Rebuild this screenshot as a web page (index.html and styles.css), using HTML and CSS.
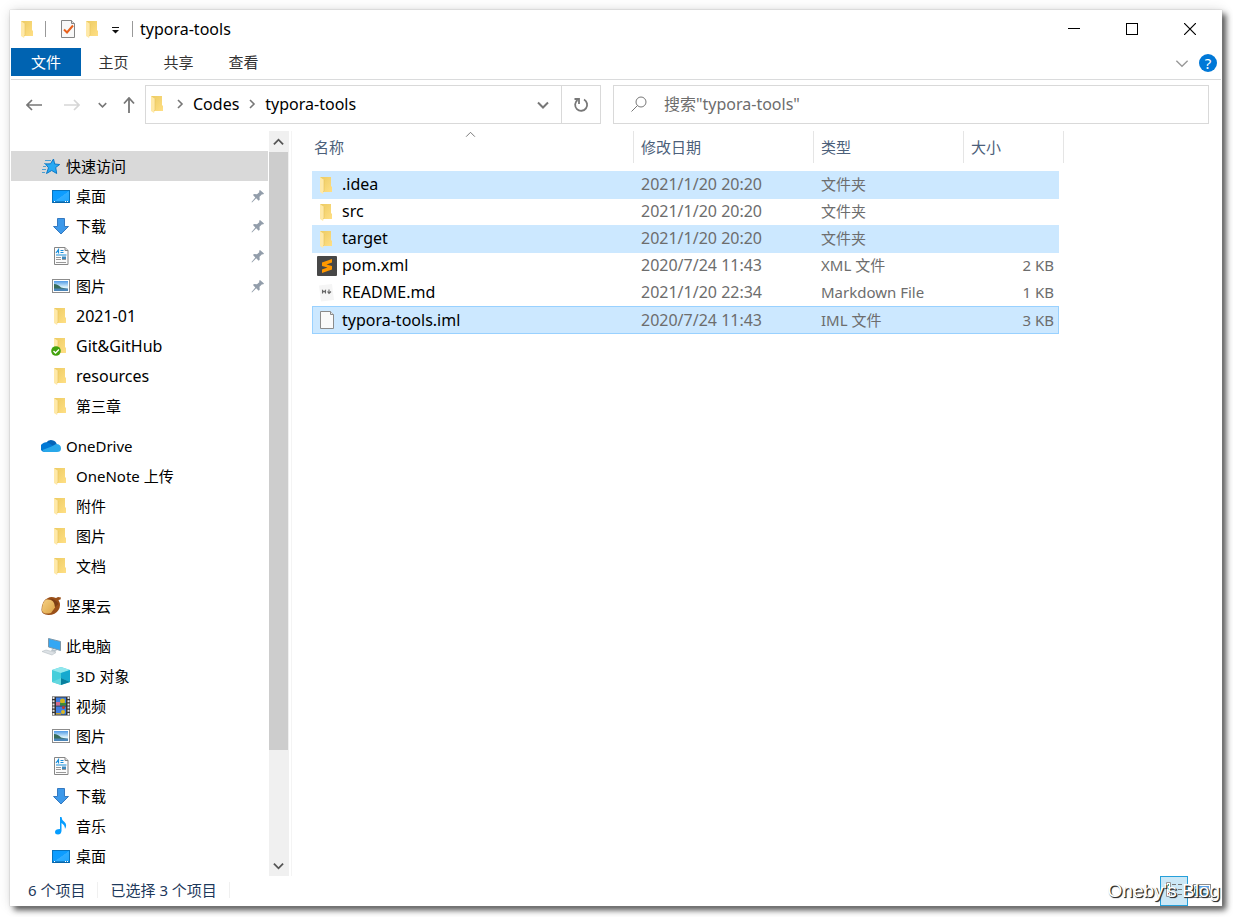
FILE: index.html
```html
<!DOCTYPE html>
<html lang="zh-CN">
<head>
<meta charset="utf-8">
<title>typora-tools</title>
<link rel="stylesheet" href="styles.css">
</head>
<body>
<svg class="defs" aria-hidden="true">
  <defs>
    <linearGradient id="g-folder" x1="0" x2="1" y1="0" y2="1"><stop offset="0" stop-color="#eccb62"/><stop offset="1" stop-color="#ffdf85"/></linearGradient>
    <linearGradient id="g-blue" x1="0" x2="1" y1="0" y2="1"><stop offset="0" stop-color="#0a9cff"/><stop offset="0.5" stop-color="#0d9dff"/><stop offset="0.52" stop-color="#2fadff"/><stop offset="1" stop-color="#1ea6ff"/></linearGradient>
    <linearGradient id="g-sky" x1="0" x2="0" y1="0" y2="1"><stop offset="0" stop-color="#4f9ae6"/><stop offset="0.6" stop-color="#d9f1fb"/><stop offset="1" stop-color="#eef"/></linearGradient>
    <linearGradient id="g-nut" x1="0" x2="1" y1="0" y2="1"><stop offset="0" stop-color="#f5d084"/><stop offset="1" stop-color="#dca345"/></linearGradient>
  </defs>
  <symbol id="folder" viewBox="0 0 20 20"><path d="M3 2h11v9l1 1v5H5z" fill="url(#g-folder)"/><path d="M3 2l4 3v11l-1 3-3-2z" fill="#ffe9a8"/><path d="M7 5v11l-1 1" fill="none" stroke="#e6c25c" stroke-width=".6"/></symbol>
  <symbol id="check-doc" viewBox="0 0 20 20"><path d="M3.500 1.500h10l3 3v14h-13z" fill="#f8f8f8" stroke="#858585"/><path d="M13.500 1.500v3h3" fill="#ddd" stroke="#858585"/><path d="M6 10.500l3 3 6-7" fill="none" stroke="#e8601c" stroke-width="2"/></symbol>
  <symbol id="star" viewBox="0 0 20 20"><path d="M12.500 3l1.200 5 5 .500-4 3 1 6-5-3-5.200 3 2-5.700-3-3.800 5-.200z" fill="#27a9f3" stroke="#0c78c6"/><path d="M4 4.500h6M3 7.500h3M2 10.500h3M1 13.500h4M1 16.500h3" stroke="#4b9fd2" fill="none"/></symbol>
  <symbol id="desktop" viewBox="0 0 20 20"><rect x="1.500" y="4.500" width="17" height="12" fill="url(#g-blue)" stroke="#0873bd"/><path d="M2 16h16" stroke="#075b99"/><path d="M3 15.500h1M14 15.500h1M16 15.500h1" stroke="#fff"/></symbol>
  <symbol id="download" viewBox="0 0 20 20"><path d="M6.500 2.500h7v8h4L10 18 2.500 10.500h4z" fill="#3d99ea" stroke="#3579c0"/></symbol>
  <symbol id="document" viewBox="0 0 20 20"><path d="M3.500 1.500h10.500l3 3v14H3.500z" fill="#fcfcfc" stroke="#868686"/><path d="M14 1.500v3h3" fill="#ddd" stroke="#868686"/><path d="M5 7L7.500 3.500v4M9.500 4.500h3M9.500 6.500h3M5 9h10.500" stroke="#168dda" stroke-width="1.200" fill="none"/><path d="M5 11.500h5M5 13.500h5M5 16.500h10M11 13.500h4" stroke="#9a9a9a"/><path d="M11 10.500h4v2.500h-4z" fill="#4089bc"/></symbol>
  <symbol id="picture" viewBox="0 0 20 20"><rect x="1.500" y="3.500" width="17" height="13" fill="#fff" stroke="#8c8c8c"/><rect x="3" y="5" width="14" height="10" fill="url(#g-sky)"/><path d="M3 8q4 0 7 3.500l7 1.500H3z" fill="#386c5b"/><path d="M3 12.500h14V15H3z" fill="#4b86b9"/></symbol>
  <symbol id="folder-ok" viewBox="0 0 20 20"><use href="#folder"/><circle cx="5" cy="15" r="4.800" fill="#43a20d"/><path d="M2.500 15l2 2L8 13.500" fill="none" stroke="#fff" stroke-width="1.400"/></symbol>
  <symbol id="cloud" viewBox="0 0 20 20"><path d="M5 7a6 6 0 0 1 11 2l-4 4-7-2z" fill="#0364b8"/><path d="M4 16A4.500 4.500 0 0 1 1 8Q4 5 8 7l7 5-9 3.500z" fill="#0078d4"/><path d="M10.500 10.500l4.500-2.500q5 0 5 4.500 0 3.500-4 3.500H4q-2 0-2.500-2z" fill="#28a8ea"/></symbol>
  <symbol id="nut" viewBox="0 0 20 20"><path d="M7 2q3-2 8 0l2-1 3 .500-.500 2-2 .500q3 5 0 10-3 5-10 5-7-.500-7-5Q1 4 7 2z" fill="#9a5019"/><path d="M5 3.500q9-1 9 8l-4 5.500q-8 2-9-2.500Q1 6 5 3.500z" fill="url(#g-nut)"/><path d="M8 2.500q6 2 6 8.500l3.500-3q-2-5-9.500-5.500z" fill="#7c3f16"/></symbol>
  <symbol id="pc" viewBox="0 0 20 20"><path d="M7.500 2.500l12 3v9l-12-3.500z" fill="#35a7f3" stroke="#7d97a9"/><path d="M11 13l5 1.500-2 1.500-4-1z" fill="#b7c2c9"/><path d="M1 15.500l4-1.500 10 2.500-4 2.500z" fill="#dce1e5" stroke="#b6bdc3" stroke-width=".6"/></symbol>
  <symbol id="cube" viewBox="0 0 20 20"><path d="M1 4l9-3 9 3v12l-9 3-9-3z" fill="#45cedb"/><path d="M1 4l9-3 9 3-9 3z" fill="#91e7ed"/><path d="M10 7l9-3v12l-9-4z" fill="#16a9cf"/><path d="M10 12l9 4-9 3z" fill="#087f9e"/><path d="M1 16l9-4v7z" fill="#65d8df"/></symbol>
  <symbol id="video" viewBox="0 0 20 20"><path d="M1 .500h18v19H1z" fill="#333"/><path d="M5 1.500h10v8H5zM5 10.500h10v8H5z" fill="#3d7de0"/><path d="M2.500 1v18M17.500 1v18" stroke="#e5e5e5" stroke-width="2" stroke-dasharray="2 1.200"/><path d="M5 6h4v3.500H5z" fill="#d56b8a"/><circle cx="11.500" cy="5" r="2.500" fill="#d3b51d"/><path d="M9 7h6v2.500H9z" fill="#3f8b36"/><circle cx="12.500" cy="11.500" r="1.500" fill="#c33b25"/><circle cx="12" cy="16" r="2" fill="#ddb71e"/><path d="M5 17h5v1.500H5z" fill="#c9a12b"/></symbol>
  <symbol id="music" viewBox="0 0 20 20"><path d="M9 1h1.500q0 3 3 5 3 3 .500 7 0-4-3.500-6v8q-.500 3.500-3.500 3.500T4 16q0-3 5-3z" fill="#069dff"/></symbol>
  <symbol id="sublime" viewBox="0 0 20 20"><rect width="20" height="20" rx="1" fill="#474747"/><path d="M5 6.500L15 3v3.500L9.500 8.500 15 10v3.500L5 17v-3.500l5.500-2L5 10z" fill="#ff9800"/></symbol>
  <symbol id="markdown" viewBox="0 0 20 20"><path d="M2 2.500L15 1l2 16L4 18.500z" fill="#f5f5f5"/><path d="M5.500 10.500v-3l1.500 1.500 1.500-1.500v3M12 6.500v4M10.500 8.500l1.500 2 2-2" fill="none" stroke="#666" stroke-width="1.100"/></symbol>
  <symbol id="blank" viewBox="0 0 20 20"><path d="M3.500 1.500h10l3 3v14h-13z" fill="#fafafa" stroke="#8b8b8b"/><path d="M13.500 1.500v3h3" fill="#e8e8e8" stroke="#8b8b8b"/></symbol>
  <symbol id="pin" viewBox="0 0 14 14"><path d="M9 1l4 3.500-1 1-1-.200-2.500 2.500.200 3-1 1-2.500-2.500L1 13.500.500 13l3.800-4.500L2 6l1-1 3 .200L8.500 3 8 2z" fill="#929daa"/></symbol>
  <symbol id="chev-down" viewBox="0 0 12 8"><path d="M1 1.500l5 5 5-5" fill="none" stroke="currentColor" stroke-width="var(--w, 2)"/></symbol>
  <symbol id="chev-up" viewBox="0 0 12 8"><path d="M1 6.500l5-5 5 5" fill="none" stroke="currentColor" stroke-width="var(--w, 2)"/></symbol>
  <symbol id="chev-right" viewBox="0 0 8 12"><path d="M2 2l4 4-4 4" fill="none" stroke="currentColor" stroke-width="1.600"/></symbol>
</svg>

<div class="window">
  <header class="titlebar">
    <svg class="icon"><use href="#folder"/></svg>
    <span class="bar"></span>
    <button class="quick quick-props" aria-label="属性"><svg class="icon"><use href="#check-doc"/></svg></button>
    <button class="quick" aria-label="新建文件夹"><svg class="icon"><use href="#folder"/></svg></button>
    <button class="quick quick-more" aria-label="自定义快速访问工具栏"><svg width="9" height="8" viewBox="0 0 9 8"><path d="M1 1.500h7" stroke="#111"/><path d="M1 4h7L4.500 7.500z" fill="#111"/></svg></button>
    <span class="bar"></span>
    <h1 class="title">typora-tools</h1>
    <div class="controls">
      <button class="control" aria-label="最小化"><svg width="12" height="12"><path d="M0 5.500h12" stroke="#000"/></svg></button>
      <button class="control" aria-label="最大化"><svg width="12" height="12"><rect x=".5" y=".5" width="11" height="11" fill="none" stroke="#000"/></svg></button>
      <button class="control" aria-label="关闭"><svg width="12" height="12"><path d="M0 0l12 12M12 0L0 12" stroke="#000" stroke-width="1.200"/></svg></button>
    </div>
  </header>

  <nav class="ribbon">
    <button class="tab tab-file">文件</button>
    <button class="tab">主页</button>
    <button class="tab">共享</button>
    <button class="tab">查看</button>
    <div class="ribbon-end">
      <button class="plain expand" aria-label="展开功能区"><svg width="14" height="9"><use href="#chev-down"/></svg></button>
      <button class="help" aria-label="帮助">?</button>
    </div>
  </nav>

  <div class="location">
    <div class="history">
      <button class="plain" aria-label="后退"><svg width="16" height="12"><path d="M1 6h15M6 1L1 6l5 5" fill="none" stroke="#777" stroke-width="1.700"/></svg></button>
      <button class="plain" aria-label="前进" disabled><svg width="16" height="12"><path d="M0 6h15M10 1l5 5-5 5" fill="none" stroke="#d6d6d6" stroke-width="1.700"/></svg></button>
      <button class="plain recent" aria-label="最近浏览的位置"><svg width="9" height="6"><use href="#chev-down"/></svg></button>
      <button class="plain" aria-label="向上"><svg width="12" height="16"><path d="M6 16V1M1 6.500L6 1l5 5.500" fill="none" stroke="#777" stroke-width="1.800"/></svg></button>
    </div>
    <div class="address">
      <svg class="icon"><use href="#folder"/></svg>
      <svg class="crumb-sep" width="8" height="12"><use href="#chev-right"/></svg>
      <a class="crumb" href="#codes">Codes</a>
      <svg class="crumb-sep" width="8" height="12"><use href="#chev-right"/></svg>
      <a class="crumb" href="#typora-tools">typora-tools</a>
      <button class="plain drop" aria-label="以前的位置"><svg width="12" height="8"><use href="#chev-down"/></svg></button>
      <button class="plain refresh" aria-label="刷新"><svg width="16" height="16" viewBox="0 0 16 16"><path d="M11 2.500A6 6 0 1 1 4.500 3M1.500 2H6v5" fill="none" stroke="#777" stroke-width="1.800"/></svg></button>
    </div>
    <label class="search">
      <svg width="16" height="16" viewBox="0 0 16 16"><circle cx="10" cy="6" r="5" fill="none" stroke="#777"/><path d="M6.500 9.500L.500 15.500" stroke="#777"/></svg>
      <input type="text" aria-label="搜索" placeholder="搜索&quot;typora-tools&quot;">
    </label>
  </div>

  <div class="main">
    <aside class="sidebar">
      <div class="tree">
        <ul class="group">
          <li class="node root active"><svg class="icon"><use href="#star"/></svg>快速访问</li>
          <li class="node"><svg class="icon"><use href="#desktop"/></svg>桌面<svg class="pin"><use href="#pin"/></svg></li>
          <li class="node"><svg class="icon"><use href="#download"/></svg>下载<svg class="pin"><use href="#pin"/></svg></li>
          <li class="node"><svg class="icon"><use href="#document"/></svg>文档<svg class="pin"><use href="#pin"/></svg></li>
          <li class="node"><svg class="icon"><use href="#picture"/></svg>图片<svg class="pin"><use href="#pin"/></svg></li>
          <li class="node latin"><svg class="icon"><use href="#folder"/></svg>2021-01</li>
          <li class="node latin"><svg class="icon"><use href="#folder-ok"/></svg>Git&amp;GitHub</li>
          <li class="node latin"><svg class="icon"><use href="#folder"/></svg>resources</li>
          <li class="node"><svg class="icon"><use href="#folder"/></svg>第三章</li>
        </ul>
        <ul class="group">
          <li class="node root"><svg class="icon"><use href="#cloud"/></svg>OneDrive</li>
          <li class="node"><svg class="icon"><use href="#folder"/></svg>OneNote 上传</li>
          <li class="node"><svg class="icon"><use href="#folder"/></svg>附件</li>
          <li class="node"><svg class="icon"><use href="#folder"/></svg>图片</li>
          <li class="node"><svg class="icon"><use href="#folder"/></svg>文档</li>
        </ul>
        <ul class="group">
          <li class="node root"><svg class="icon"><use href="#nut"/></svg>坚果云</li>
        </ul>
        <ul class="group">
          <li class="node root"><svg class="icon"><use href="#pc"/></svg>此电脑</li>
          <li class="node"><svg class="icon"><use href="#cube"/></svg>3D 对象</li>
          <li class="node"><svg class="icon"><use href="#video"/></svg>视频</li>
          <li class="node"><svg class="icon"><use href="#picture"/></svg>图片</li>
          <li class="node"><svg class="icon"><use href="#document"/></svg>文档</li>
          <li class="node"><svg class="icon"><use href="#download"/></svg>下载</li>
          <li class="node"><svg class="icon"><use href="#music"/></svg>音乐</li>
          <li class="node"><svg class="icon"><use href="#desktop"/></svg>桌面</li>
        </ul>
      </div>
      <div class="scrollbar">
        <button class="plain scroll-btn" aria-label="向上滚动"><svg width="11" height="8"><use href="#chev-up"/></svg></button>
        <div class="track"><div class="thumb"></div></div>
        <button class="plain scroll-btn" aria-label="向下滚动"><svg width="11" height="8"><use href="#chev-down"/></svg></button>
      </div>
    </aside>

    <section class="files">
      <table class="list">
        <colgroup><col class="c-name"><col class="c-date"><col class="c-type"><col class="c-size"></colgroup>
        <thead>
          <tr>
            <th><div class="head head-name">名称<svg class="sort" width="11" height="7"><use href="#chev-up"/></svg></div></th>
            <th><div class="head">修改日期</div></th>
            <th><div class="head">类型</div></th>
            <th><div class="head head-size">大小</div></th>
          </tr>
        </thead>
        <tbody>
          <tr class="selected"><td><div class="file"><svg class="icon"><use href="#folder"/></svg>.idea</div></td><td class="latin">2021/1/20 20:20</td><td>文件夹</td><td></td></tr>
          <tr><td><div class="file"><svg class="icon"><use href="#folder"/></svg>src</div></td><td class="latin">2021/1/20 20:20</td><td>文件夹</td><td></td></tr>
          <tr class="selected"><td><div class="file"><svg class="icon"><use href="#folder"/></svg>target</div></td><td class="latin">2021/1/20 20:20</td><td>文件夹</td><td></td></tr>
          <tr><td><div class="file"><svg class="icon"><use href="#sublime"/></svg>pom.xml</div></td><td class="latin">2020/7/24 11:43</td><td>XML 文件</td><td>2 KB</td></tr>
          <tr><td><div class="file"><svg class="icon"><use href="#markdown"/></svg>README.md</div></td><td class="latin">2021/1/20 22:34</td><td>Markdown File</td><td>1 KB</td></tr>
          <tr class="selected focused"><td><div class="file"><svg class="icon"><use href="#blank"/></svg>typora-tools.iml</div></td><td class="latin">2020/7/24 11:43</td><td>IML 文件</td><td>3 KB</td></tr>
        </tbody>
      </table>
    </section>
  </div>

  <footer class="status">
    <span class="stat">6 个项目</span>
    <span class="stat">已选择 3 个项目</span>
    <div class="views">
      <button class="view view-on" aria-label="详细信息"><svg width="20" height="18" viewBox="0 0 20 18"><path d="M2.500.500h4v14h-4z" fill="#fff" stroke="#999"/><path d="M4 3h1M4 7h1" stroke="#4a8" stroke-width="2"/><path d="M4 12h1" stroke="#c54" stroke-width="2"/><path d="M8 2.500h4M14 2.500h4M8 7.500h4M14 7.500h4M8 12.500h4M14 12.500h4" stroke="#777"/></svg></button>
      <button class="view" aria-label="大图标"><svg width="20" height="20"><use href="#picture"/></svg></button>
      <span class="watermark">Oneby's Blog</span>
    </div>
  </footer>
</div>
</body>
</html>
```
FILE: styles.css
```css
* { box-sizing: border-box; }

body {
  margin: 0;
  height: 100vh;
  padding: 10px 11px 11px 10px;
  background: #fff;
  color: #000;
  font: 15px/20px "Noto Sans", "Noto Sans CJK SC", sans-serif;
}

.defs { position: absolute; width: 0; height: 0; }
svg { display: block; flex: none; }
.icon { width: 20px; height: 20px; }
.latin { font-size: 16px; }

button { font: inherit; color: inherit; border: 0; padding: 0; background: none; }
.plain { display: flex; align-items: center; justify-content: center; }

.window {
  height: 100%;
  display: flex;
  flex-direction: column;
  padding: 0 1px;
  background: #fff;
  box-shadow: 0 0 1px #aaa, 4px 4px 6px rgba(0, 0, 0, .65), 0 0 12px rgba(0, 0, 0, .12);
}

.titlebar { display: flex; align-items: center; height: 38px; padding-left: 7px; }
.bar { width: 1px; height: 16px; background: #999; margin-left: 7px; }
.quick { margin-left: 5px; }
.quick-props { margin-left: 12px; }
.quick-more { margin-left: 8px; padding-top: 2px; }
.quick-more + .bar { margin-left: 12px; }
.title { margin: 0; padding-left: 7px; font-size: 16px; font-weight: 400; }
.controls { display: flex; align-self: stretch; margin-left: auto; margin-right: 2px; }
.control { width: 58px; display: flex; align-items: center; justify-content: center; }

.ribbon { display: flex; height: 32px; padding-bottom: 3px; border-bottom: 1px solid #dadbdc; }
.tab { width: 65px; color: #333; }
.tab-file { width: 70px; background: #0063b1; color: #fff; }
.ribbon-end { display: flex; align-items: center; margin-left: auto; padding: 2px 4px 0 0; gap: 10px; }
.expand { color: #999; --w: 1.2; }
.help { width: 18px; height: 18px; border-radius: 50%; background: #0078d7; color: #fff; font-size: 15px; line-height: 18px; }

.location { display: flex; padding: 5px 12px 6px 0; height: 50px; }
.history { width: 134px; display: flex; align-items: center; gap: 16px; padding-left: 15px; }
.history .plain + .plain { margin-left: 6px; }
.history .plain + .recent { margin-left: 2px; }
.history .recent + .plain { margin-left: 0; }
.recent { color: #777; }
.address, .search { display: flex; align-items: center; border: 1px solid #d9d9d9; }
.address { flex: 456 1 456px; padding: 0 0 2px 2px; }
.crumb { color: #000; text-decoration: none; margin: 0 9px; font-size: 16px; }
.crumb-sep { color: #777; }
.icon + .crumb-sep { margin-left: 8px; }
.drop { margin-left: auto; width: 36px; padding-top: 2px; color: #777; }
.refresh { width: 39px; align-self: stretch; margin-bottom: -2px; border-left: 1px solid #d9d9d9; }
.search { flex: 596 1 596px; margin-left: 12px; padding: 0 0 2px 17px; gap: 17px; }
.search input { flex: 1; min-width: 0; border: 0; outline: 0; padding: 0; font: inherit; font-size: 16px; color: #6d6d6d; }
.search input::placeholder { color: #6d6d6d; opacity: 1; }

.main { flex: 1; min-height: 0; display: flex; padding-top: 1px; }
.sidebar { width: 281px; display: flex; border-right: 1px solid #f4f4f4; }
.tree { flex: 1; overflow: hidden; padding-top: 20px; margin-right: 1px; }
.group { list-style: none; margin: 0 0 10px; padding: 0; }
.node { display: flex; align-items: center; height: 30px; gap: 5px; padding: 0 3px 0 40px; }
.root { padding-left: 30px; }
.active { background: #d9d9d9; }
.pin { width: 14px; height: 14px; margin-left: auto; }

.scrollbar { width: 20px; margin-right: 2px; display: flex; flex-direction: column; background: #f0f0f0; }
.scroll-btn { height: 21px; padding-right: 1px; color: #555; }
.track { flex: 1; padding-right: 1px; }
.thumb { height: 85%; background: #cdcdcd; }

.files { flex: 1; padding-left: 20px; overflow: hidden; }
.list { table-layout: fixed; width: 747px; border-collapse: separate; border-spacing: 0; }
.c-name { width: 322px; }
.c-date { width: 180px; }
.c-type { width: 150px; }
.c-size { width: 95px; }
.list th { padding: 0 0 8px; font-weight: 400; text-align: left; color: #4c607a; }
.head { height: 32px; line-height: 32px; padding-left: 7px; border-right: 1px solid #e5e5e5; }
.head-name { position: relative; padding-left: 2px; }
.head-size { margin-right: -5px; }
.sort { position: absolute; top: 0; left: calc(50% - 8px); color: #666; --w: 1; }
.list td { height: 27px; padding: 0 5px 0 7px; color: #6d6d6d; line-height: 27px; }
.list td:first-child { color: #000; }
.list td:last-child { text-align: right; }
.file { display: flex; align-items: center; gap: 5px; height: 27px; margin-left: -2px; font-size: 16px; }
.selected { background: #cce8ff; box-shadow: 0 1px 0 #cce8ff; }
.focused { box-shadow: inset 0 0 0 1px #99d1ff; }
.focused td { height: 28px; }

.status { display: flex; align-items: center; height: 30px; padding: 0 0 2px 17px; color: #1e395b; }
.stat { padding-right: 12px; margin-right: 12px; line-height: 16px; border-right: 1px solid #f0f0f0; }
.views { position: relative; display: flex; margin-left: auto; align-self: stretch; margin-bottom: -2px; padding-right: 5px; }
.view { width: 28px; display: flex; align-items: center; justify-content: center; }
.view-on { background: #cce8f6; border: 1px solid #26a0da; }
.watermark {
  position: absolute;
  right: 1px;
  bottom: 3px;
  white-space: nowrap;
  font: 19px/24px "Liberation Sans", sans-serif;
  color: #fff;
  text-shadow: 1px 1px 0 #333, 1px 1px 1px #000;
}
```
